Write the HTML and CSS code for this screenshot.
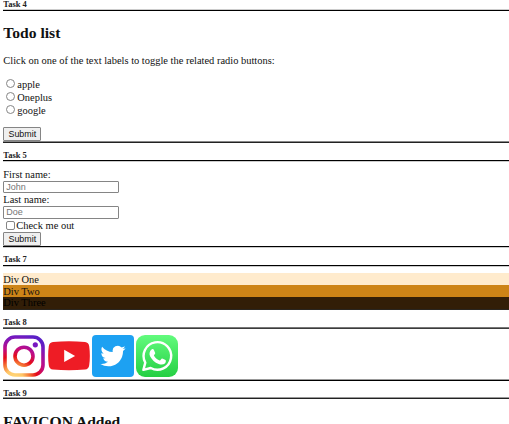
FILE: index.html
```
<!DOCTYPE html>
<html lang="en">
<head>
<meta charset="utf-8">
<title>Tasks</title>
<link rel="stylesheet" href="styles.css">
</head>
<body>
<h5 class="task first">Task 4</h5>
<section class="todo">
  <h2>Todo list</h2>
  <p>Click on one of the text labels to toggle the related radio buttons:</p>
  <form>
    <label class="choice"><input type="radio" name="brand"><span>apple</span></label>
    <label class="choice"><input type="radio" name="brand"><span>Oneplus</span></label>
    <label class="choice"><input type="radio" name="brand"><span>google</span></label>
    <button type="button">Submit</button>
  </form>
</section>
<h5 class="task five">Task 5</h5>
<form class="names">
  <label for="fname">First name:</label>
  <input class="field" id="fname" type="text" placeholder="John">
  <label for="lname">Last name:</label>
  <input class="field" id="lname" type="text" placeholder="Doe">
  <label class="choice"><input type="checkbox"><span>Check me out</span></label>
  <button type="button">Submit</button>
</form>
<h5 class="task seven">Task 7</h5>
<section class="stripes">
  <div class="one">Div One</div>
  <div class="two">Div Two</div>
  <div class="three">Div Three</div>
</section>
<h5 class="task eight">Task 8</h5>
<section class="icons">
  <svg viewBox="0 0 42 42">
    <defs>
      <radialGradient id="ig" gradientUnits="userSpaceOnUse" cx="11" cy="44" r="46">
        <stop offset="0" stop-color="#ffdc7d"/><stop offset=".2" stop-color="#ffc668"/><stop offset=".36" stop-color="#f46d31"/><stop offset=".5" stop-color="#e50b18"/><stop offset=".68" stop-color="#c00c85"/><stop offset=".9" stop-color="#7a18bd"/><stop offset="1" stop-color="#5b20c6"/>
      </radialGradient>
    </defs>
    <rect x="2" y="2" width="38" height="38" rx="10" fill="none" stroke="url(#ig)" stroke-width="3.6"/>
    <circle cx="21" cy="21.2" r="9" fill="none" stroke="url(#ig)" stroke-width="3.6"/>
    <circle cx="32.3" cy="9.8" r="2.6" fill="#7817c0"/>
  </svg>
  <svg viewBox="0 0 42 42">
    <path fill="#ee1c25" d="M5 6.9Q21 5.4 37 6.9Q40.7 7.3 41.2 11.2Q42.5 20.7 41.2 30.2Q40.7 34.1 37 34.5Q21 36 5 34.5Q1.3 34.1.8 30.2Q-.5 20.7 .8 11.2Q1.3 7.3 5 6.9Z"/>
    <path fill="#fff" d="M16.2 14.7v12.4L27.1 20.9z"/>
  </svg>
  <svg viewBox="0 0 42 42">
    <rect width="42" height="42" rx="4" fill="#1da1f2"/>
    <path fill="#fff" transform="translate(8.4 8.4) scale(1.05)" d="M23.953 4.57a10 10 0 01-2.825.775 4.958 4.958 0 002.163-2.723c-.951.555-2.005.959-3.127 1.184a4.92 4.92 0 00-8.384 4.482C7.69 8.095 4.067 6.13 1.64 3.162a4.822 4.822 0 00-.666 2.475c0 1.71.87 3.213 2.188 4.096a4.904 4.904 0 01-2.228-.616v.06a4.923 4.923 0 003.946 4.827 4.996 4.996 0 01-2.212.085 4.936 4.936 0 004.604 3.417 9.867 9.867 0 01-6.102 2.105c-.39 0-.779-.023-1.17-.067a13.995 13.995 0 007.557 2.209c9.053 0 13.998-7.496 13.998-13.985 0-.21 0-.42-.015-.63A9.935 9.935 0 0024 4.59z"/>
  </svg>
  <svg viewBox="0 0 42 42">
    <defs><linearGradient id="wa" x2="0" y2="1"><stop stop-color="#62fb7d"/><stop offset="1" stop-color="#25cf43"/></linearGradient></defs>
    <rect width="42" height="42" rx="9" fill="url(#wa)"/>
    <path fill="none" stroke="#fff" stroke-width="2.4" stroke-linejoin="round" d="M7.4 34.9l1.9-7.3a13.8 13.8 0 1 1 5.4 5.4z"/>
    <path fill="#fff" d="M15.8 14.3c.5-.5 1.5-.5 1.9.2l1.5 3.4c.2.7-.9 1.7-1.2 2.1-.3.4.3 1.2.7 1.7 1.3 1.7 2.8 2.9 4.9 3.8.8.3 1.8-2 2.5-1.9.6.1 3.2 1.4 3.6 1.7.5.5 0 2.5-.8 3.2-1.7 1.4-3.8 1.4-6.2.5-4-1.5-6.7-4.2-8.5-7.5-1.4-2.6-.7-5.2 1.6-7.2z"/>
  </svg>
</section>
<h5 class="task nine">Task 9</h5>
<h2 class="favicon">FAVICON Added</h2>
</body>
</html>
```
FILE: styles.css
```
* { box-sizing: border-box; }
html { height: 424px; overflow: hidden; }
body {
  margin: 0 0 0 3.3px;
  height: 424px;
  overflow: hidden;
  background: #fff;
  color: #111;
  font: 10.44px/13px "Liberation Serif", serif;
}
h2, h5, p { margin: 0; }
form { display: flex; flex-direction: column; align-items: flex-start; }

.task {
  height: 19px;
  padding-top: 7px;
  font-size: 8.5px;
  line-height: 10px;
  color: #222;
  border-bottom: 1px solid #000;
  box-shadow: 0 1px #ccc;
}
.first { height: 11px; padding-top: 0; line-height: 9px; box-shadow: inset 0 -1px #ccc; }
.five { height: 18px; }
.nine { height: 18px; border-color: #222; box-shadow: inset 0 -1px #999; }
.eight { border-color: #3c3c3c; box-shadow: inset 0 -1px #777; }

h2 { font-size: 15.6px; line-height: 18px; }
.todo { height: 132px; padding-top: 13px; border-bottom: 1px solid #222; box-shadow: inset 0 -1px #888; }
.todo p { margin: 12px 0 11px; line-height: 13px; }
.choice { display: flex; align-items: center; height: 13px; padding-left: 3px; }
.choice input {
  appearance: none;
  width: 9px;
  height: 9px;
  margin: 0 2px 2px 0;
  border: 1px solid #858585;
  border-radius: 50%;
  background: #fff;
}
.choice input[type=checkbox] { border-radius: 2px; margin: 0 1px 1px 0; }
button {
  width: 38px;
  height: 14px;
  padding: 0;
  border: 1px solid #858585;
  border-radius: 1px;
  background: #efefef;
  color: #111;
  font: 8.9px/12px "Liberation Sans", sans-serif;
}
.todo button { margin-top: 10px; }

.names { height: 86px; padding-top: 7px; border-bottom: 1px solid #000; box-shadow: 0 1px #ccc; }
.field {
  width: 116px;
  height: 13px;
  margin: 0;
  padding: 0 2px;
  border: 1px solid #858585;
  border-radius: 1px;
  font: 9px/11px "Liberation Sans", sans-serif;
}
.field::placeholder { color: #757575; }
.names label { height: 12.5px; }
.names .choice { height: 13.5px; padding-top: 1px; }

.stripes { margin-top: 7px; height: 37px; line-height: 13px; border-bottom: 1px solid #29251f; }
.stripes div { height: 12px; }
.one { background: #ffebcd; }
.two { background: #cd8417; }
.three { background: #321e07; color: #000; line-height: 12px; }

.icons { display: flex; gap: 2.4px; height: 52px; padding-top: 6px; border-bottom: 1px solid #000; box-shadow: inset 0 -1px #999; }
.icons svg { display: block; flex: none; width: 42px; height: 42px; }
.favicon { margin-top: 14px; }
```
